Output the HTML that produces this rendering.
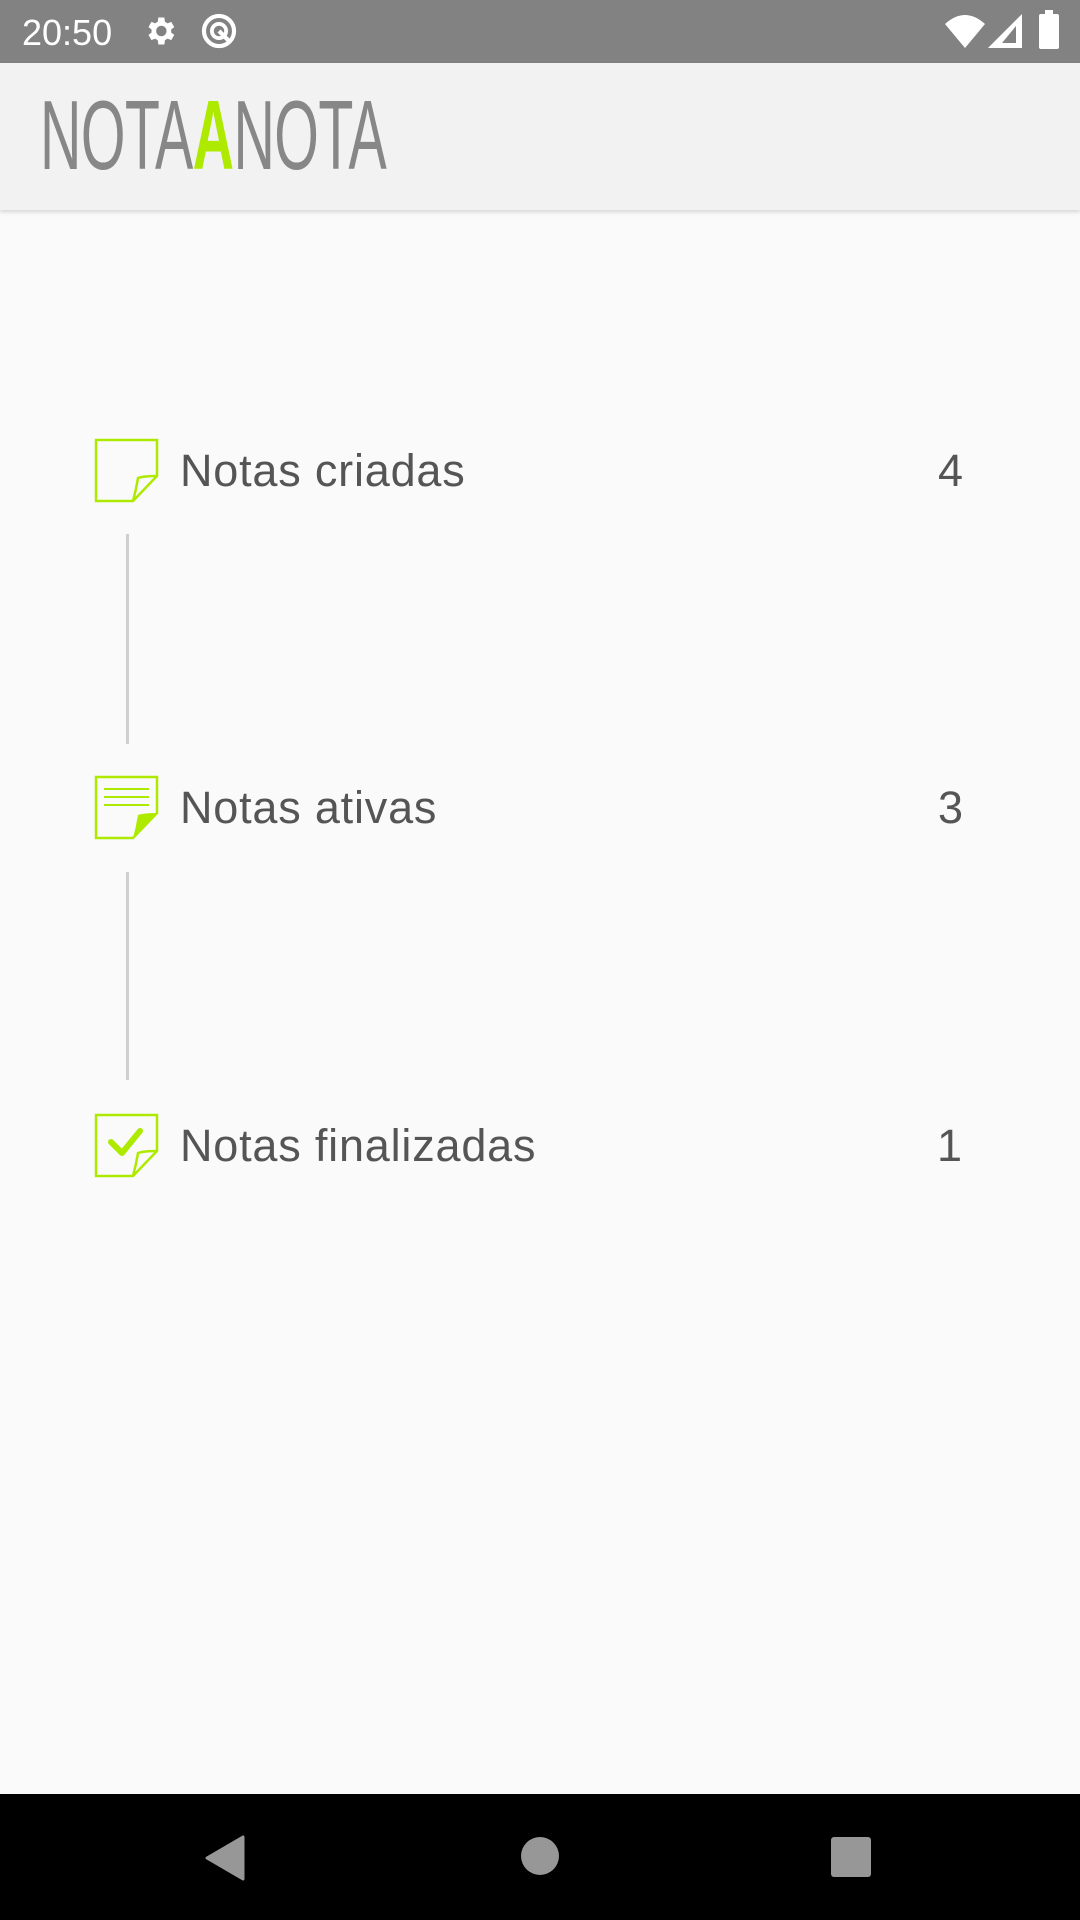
<!DOCTYPE html>
<html><head><meta charset="utf-8"><style>
html,body{margin:0;padding:0}
body{width:1080px;height:1920px;position:relative;background:#fafafa;font-family:"Liberation Sans",sans-serif;overflow:hidden}
.sb{position:absolute;left:0;top:0;width:1080px;height:63px;background:#828282}
.hd{position:absolute;left:0;top:63px;width:1080px;height:147px;background:#f2f2f2;box-shadow:0 2px 4px rgba(0,0,0,0.15)}
.logo{position:absolute;left:40px;top:86px;font-size:98px;line-height:1;color:#878787;transform:scaleX(0.585);transform-origin:0 0;white-space:nowrap;font-weight:normal;letter-spacing:-1px}
.logo b{color:#aeea00;font-weight:bold}
.lbl{position:absolute;left:180px;font-size:45px;color:#555;line-height:1;letter-spacing:0.8px}
.num{position:absolute;left:938px;font-size:45px;color:#555;line-height:1}
.vl{position:absolute;left:126px;width:3px;background:#cfcfcf}
.nav{position:absolute;left:0;top:1794px;width:1080px;height:126px;background:#000}
</style></head><body>
<div class="sb">
<div style="position:absolute;left:22px;top:12px;color:#fff;font-size:36px">20:50</div>
<svg style="position:absolute;left:142px;top:12px" width="36" height="38" viewBox="0 0 24 24"><path fill="#fff" d="M19.4 13a7.5 7.5 0 000-2l2.1-1.6-2-3.5-2.5 1a7 7 0 00-1.7-1L14.9 3h-4l-.4 2.9a7 7 0 00-1.7 1l-2.5-1-2 3.5L6.4 11a7.5 7.5 0 000 2l-2.1 1.6 2 3.5 2.5-1a7 7 0 001.7 1l.4 2.9h4l.4-2.9a7 7 0 001.7-1l2.5 1 2-3.5zM12.9 15.5a3.5 3.5 0 110-7 3.5 3.5 0 010 7z"/></svg>
<svg style="position:absolute;left:200px;top:12px" width="38" height="38" viewBox="0 0 24 24"><circle cx="12" cy="12" r="9.5" fill="none" stroke="#fff" stroke-width="2.6"/><circle cx="12" cy="12" r="4.5" fill="none" stroke="#fff" stroke-width="2.4"/><path d="M12 12l6 6" stroke="#fff" stroke-width="2.6"/></svg>
<svg style="position:absolute;left:945px;top:14px" width="40" height="34" viewBox="0 0 40 34"><path fill="#fff" d="M0 10Q20-8 40 10L20 34Z"/></svg>
<svg style="position:absolute;left:988px;top:14px" width="34" height="34" viewBox="0 0 34 34"><path fill="#fff" d="M34 0V34H0Z"/><path fill="#828282" d="M28 12V29H14Z"/></svg>
<div style="position:absolute;left:1039px;top:14px;width:20px;height:35px;background:#fff;border-radius:2px"></div>
<div style="position:absolute;left:1045px;top:10px;width:8px;height:5px;background:#fff"></div>
</div>
<div class="hd"></div>
<div class="logo">NOTA<b>A</b>NOTA</div>

<svg style="position:absolute;left:94px;top:438px" width="66" height="66" viewBox="0 0 66 66"><path d="M2 2H63V38L39 63H2Z" fill="none" stroke="#aeea00" stroke-width="2.5"/><path d="M63 38Q50 38 44 40Q42 52 39 63" fill="none" stroke="#aeea00" stroke-width="2.5"/></svg>
<div class="lbl" style="top:448px">Notas criadas</div>
<div class="num" style="top:448px">4</div>
<div class="vl" style="top:534px;height:210px"></div>

<svg style="position:absolute;left:94px;top:775px" width="66" height="66" viewBox="0 0 66 66"><path d="M2 2H63V38L39 63H2Z" fill="none" stroke="#aeea00" stroke-width="2.5"/><path d="M63 38Q50 38 44 40Q42 52 39 63Z" fill="#aeea00"/><path d="M10 14H55M10 22H55M10 30H55" stroke="#aeea00" stroke-width="2"/></svg>
<div class="lbl" style="top:785px">Notas ativas</div>
<div class="num" style="top:785px">3</div>
<div class="vl" style="top:872px;height:208px"></div>

<svg style="position:absolute;left:94px;top:1113px" width="66" height="66" viewBox="0 0 66 66"><path d="M2 2H63V38L39 63H2Z" fill="none" stroke="#aeea00" stroke-width="2.5"/><path d="M63 38Q50 38 44 40Q42 52 39 63" fill="none" stroke="#aeea00" stroke-width="2.5"/><path d="M17 29L28 40L46 18" fill="none" stroke="#aeea00" stroke-width="6" stroke-linecap="round" stroke-linejoin="round"/></svg>
<div class="lbl" style="top:1123px">Notas finalizadas</div>
<div class="num" style="top:1123px;left:937px">1</div>

<div class="nav">
<svg style="position:absolute;left:205px;top:41px" width="40" height="46" viewBox="0 0 40 46"><path d="M38 2V44L2 23Z" fill="#979797" stroke="#979797" stroke-width="3" stroke-linejoin="round"/></svg>
<div style="position:absolute;left:521px;top:43px;width:38px;height:38px;border-radius:50%;background:#979797"></div>
<div style="position:absolute;left:831px;top:43px;width:40px;height:40px;border-radius:3px;background:#979797"></div>
</div>
</body></html>
